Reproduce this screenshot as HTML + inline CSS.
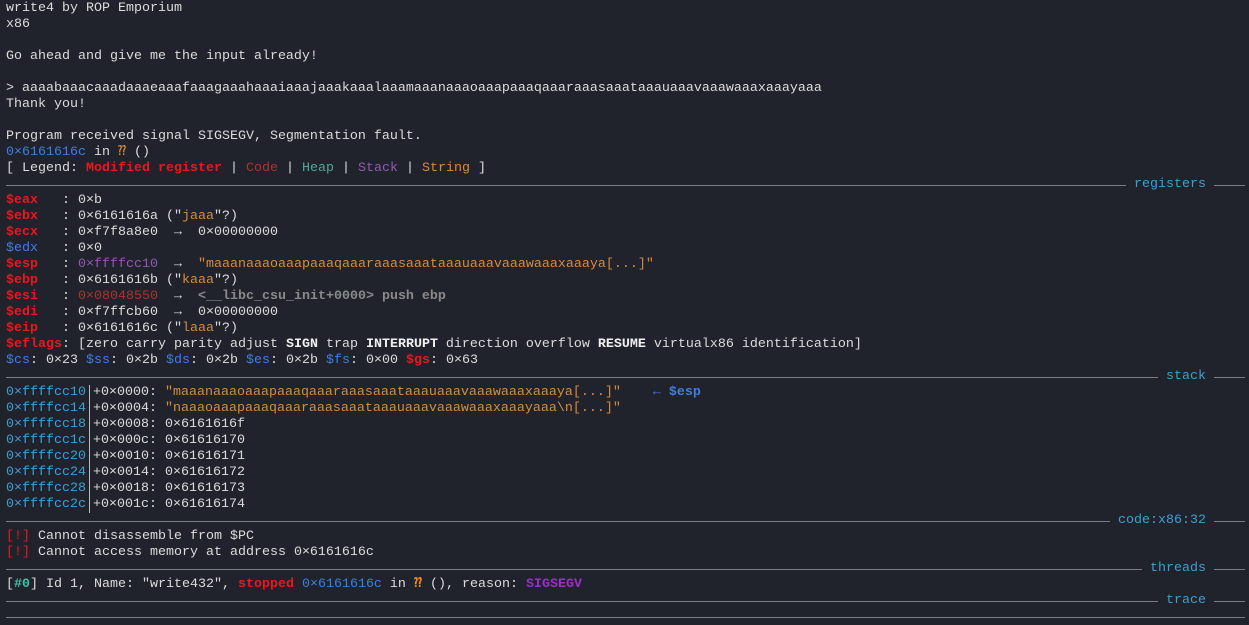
<!DOCTYPE html>
<html><head><meta charset="utf-8"><style>
html,body{margin:0;background:#21232c;width:1249px;height:620px;overflow:hidden}
#t{position:absolute;left:6px;top:1px;width:1239px;font-family:"Liberation Mono","DejaVu Sans Mono",monospace;font-size:13.33px;line-height:16px;color:#dcdcdc;white-space:pre}
.l{height:16px}
.r{color:#e8191c;font-weight:bold}
.cd{color:#a8352f}
.hp{color:#4fa89a}
.sk{color:#9159b5}
.st{color:#d98b3b}
.b{color:#3d7fe0}
.c{color:#3ba0d2}
.g{color:#8a8a8a;font-weight:bold}
.w{font-weight:bold;color:#f0f0f0}
.sep{position:relative;height:16px}
.sep:before{content:"";position:absolute;left:0;width:1239px;top:8px;border-top:1px solid #7c7e84}
.sep span{position:absolute;right:31px;top:0;background:#21232c;padding:0 8px;color:#3ba0d2}
.v{display:inline-block;border-left:1px solid #bbb;height:16px;vertical-align:top;margin-left:3px;margin-right:3px}
.mg{color:#9a2fc9;font-weight:bold}
</style></head><body><div id="t"><div class="l">write4 by ROP Emporium</div><div class="l">x86</div><div class="l"> </div><div class="l">Go ahead and give me the input already!</div><div class="l"> </div><div class="l">&gt; aaaabaaacaaadaaaeaaafaaagaaahaaaiaaajaaakaaalaaamaaanaaaoaaapaaaqaaaraaasaaataaauaaavaaawaaaxaaayaaa</div><div class="l">Thank you!</div><div class="l"> </div><div class="l">Program received signal SIGSEGV, Segmentation fault.</div><div class="l"><span class="b">0×6161616c</span> in <span class="st">⁇</span> ()</div><div class="l">[ Legend: <span class="r">Modified register</span> | <span class="cd">Code</span> | <span class="hp">Heap</span> | <span class="sk">Stack</span> | <span class="st">String</span> ]</div><div class="sep"><span>registers</span></div><div class="l"><span class="r">$eax</span>   : 0×b</div><div class="l"><span class="r">$ebx</span>   : 0×6161616a ("<span class="st">jaaa</span>"?)</div><div class="l"><span class="r">$ecx</span>   : 0×f7f8a8e0  →  0×00000000</div><div class="l"><span class="b">$edx</span>   : 0×0</div><div class="l"><span class="r">$esp</span>   : <span class="sk">0×ffffcc10</span>  →  <span class="st">"maaanaaaoaaapaaaqaaaraaasaaataaauaaavaaawaaaxaaaya[...]"</span></div><div class="l"><span class="r">$ebp</span>   : 0×6161616b ("<span class="st">kaaa</span>"?)</div><div class="l"><span class="r">$esi</span>   : <span class="cd">0×08048550</span>  →  <span class="g">&lt;__libc_csu_init+0000&gt; push ebp</span></div><div class="l"><span class="r">$edi</span>   : 0×f7ffcb60  →  0×00000000</div><div class="l"><span class="r">$eip</span>   : 0×6161616c ("<span class="st">laaa</span>"?)</div><div class="l"><span class="r">$eflags</span>: [zero carry parity adjust <span class="w">SIGN</span> trap <span class="w">INTERRUPT</span> direction overflow <span class="w">RESUME</span> virtualx86 identification]</div><div class="l"><span class="b">$cs</span>: 0×23 <span class="b">$ss</span>: 0×2b <span class="b">$ds</span>: 0×2b <span class="b">$es</span>: 0×2b <span class="b">$fs</span>: 0×00 <span class="r">$gs</span>: 0×63</div><div class="sep"><span>stack</span></div><div class="l"><span class="c">0×ffffcc10</span><span class="v"></span>+0×0000: <span class="st">"maaanaaaoaaapaaaqaaaraaasaaataaauaaavaaawaaaxaaaya[...]"</span>    <span class="b" style="font-weight:bold">← $esp</span></div><div class="l"><span class="c">0×ffffcc14</span><span class="v"></span>+0×0004: <span class="st">"naaaoaaapaaaqaaaraaasaaataaauaaavaaawaaaxaaayaaa\n[...]"</span></div><div class="l"><span class="c">0×ffffcc18</span><span class="v"></span>+0×0008: 0×6161616f</div><div class="l"><span class="c">0×ffffcc1c</span><span class="v"></span>+0×000c: 0×61616170</div><div class="l"><span class="c">0×ffffcc20</span><span class="v"></span>+0×0010: 0×61616171</div><div class="l"><span class="c">0×ffffcc24</span><span class="v"></span>+0×0014: 0×61616172</div><div class="l"><span class="c">0×ffffcc28</span><span class="v"></span>+0×0018: 0×61616173</div><div class="l"><span class="c">0×ffffcc2c</span><span class="v"></span>+0×001c: 0×61616174</div><div class="sep"><span>code:x86:32</span></div><div class="l"><span style="color:#e8191c">[!]</span> Cannot disassemble from $PC</div><div class="l"><span style="color:#e8191c">[!]</span> Cannot access memory at address 0×6161616c</div><div class="sep"><span>threads</span></div><div class="l">[<span class="hp" style="font-weight:bold;color:#3fc0a8">#0</span>] Id 1, Name: "write432", <span class="r">stopped</span> <span class="b">0×6161616c</span> in <span class="st" style="font-weight:bold;color:#f08a1a">⁇</span> (), reason: <span class="mg">SIGSEGV</span></div><div class="sep"><span>trace</span></div><div class="sep"></div></div></body></html>
